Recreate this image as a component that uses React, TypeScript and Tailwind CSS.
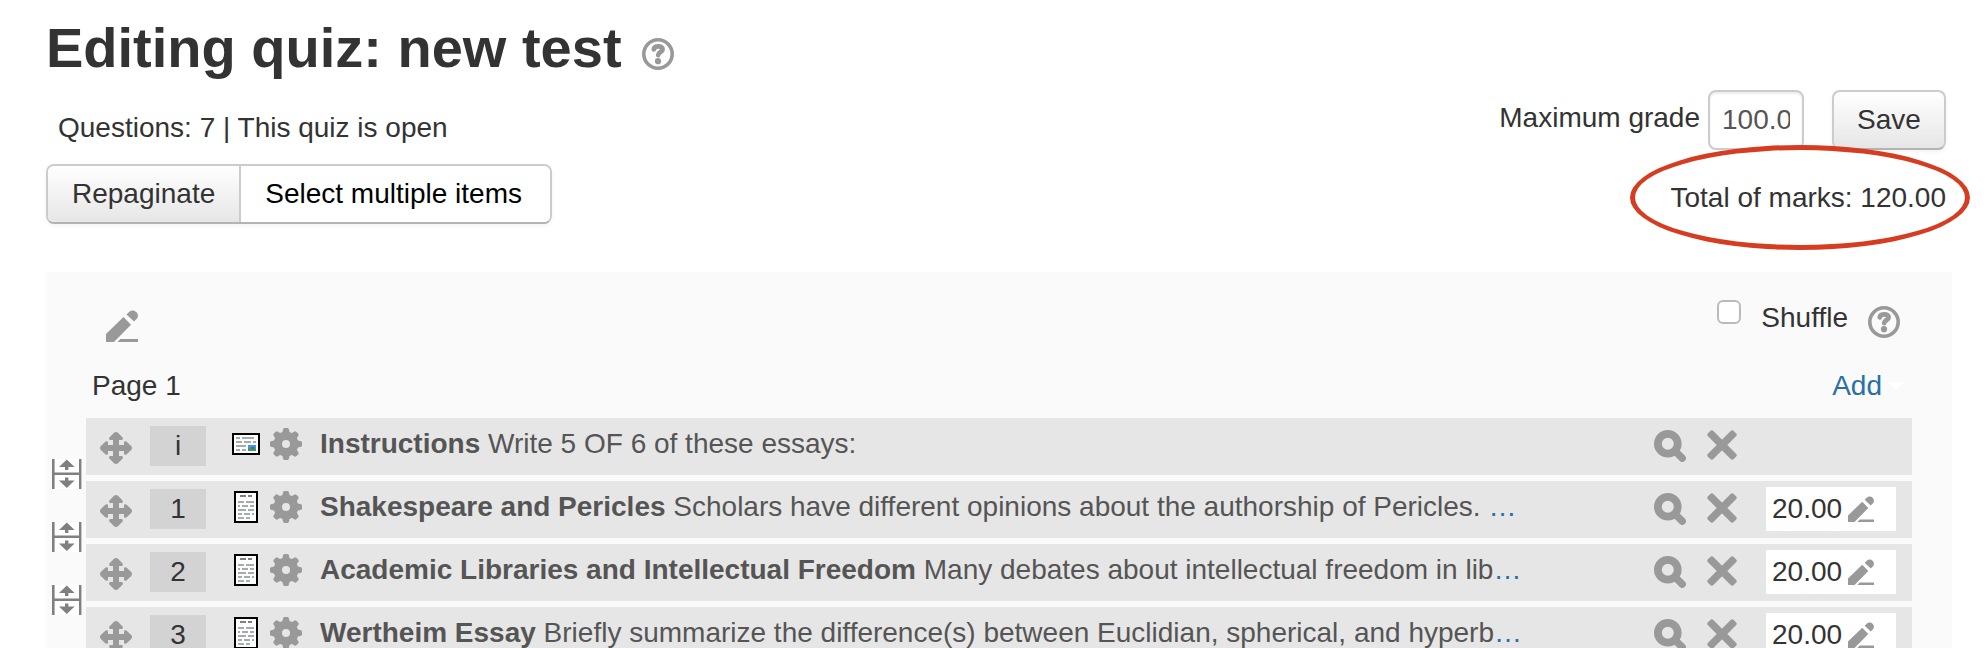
import { ReactNode } from "react";

interface Question {
  slot: string;
  name: string;
  text: string;
  truncated: boolean;
  type: "description" | "essay";
  mark?: string;
}

const questions: Question[] = [
  { slot: "i", name: "Instructions", text: "Write 5 OF 6 of these essays:", truncated: false, type: "description" },
  { slot: "1", name: "Shakespeare and Pericles", text: "Scholars have different opinions about the authorship of Pericles. ", truncated: true, type: "essay", mark: "20.00" },
  { slot: "2", name: "Academic Libraries and Intellectual Freedom", text: "Many debates about intellectual freedom in lib", truncated: true, type: "essay", mark: "20.00" },
  { slot: "3", name: "Wertheim Essay", text: "Briefly summarize the difference(s) between Euclidian, spherical, and hyperb", truncated: true, type: "essay", mark: "20.00" },
];

const gearAngles = [0, 45, 90, 135, 180, 225, 270, 315];

function HelpIcon() {
  return (
    <svg viewBox="0 0 32 32" className="block h-8 w-8" fill="none" stroke="#999">
      <circle cx="16" cy="16" r="14.2" strokeWidth="3.6" />
      <path d="M11.8 11.4C12.4 7.6 20.6 7.4 20.6 11.2C20.6 14 16.6 14 16.2 17" strokeWidth="4.8" strokeLinecap="round" />
      <circle cx="16" cy="23.2" r="3.1" fill="#999" stroke="none" />
    </svg>
  );
}

function PencilIcon({ className }: { className: string }) {
  return (
    <svg viewBox="0 0 32 32" className={className} fill="#999">
      <path d="M0 32V24L17.5 7L25 14.7L8 32Z" />
      <path d="M20.5 4.6L23.4 1.7C27.6-2 34.4 3.6 31 8.6L28 11.6Z" />
      <path d="M14.4 29H32V32H11.4Z" />
    </svg>
  );
}

function MoveIcon() {
  return (
    <svg viewBox="0 0 32 32" className="block h-8 w-8" fill="#999">
      <path d="M13 5H19V27H13ZM5 13H27V19H5Z" />
      {[0, 90, 180, 270].map((angle) => (
        <path key={angle} transform={`rotate(${angle} 16 16)`} d="M14 .8Q16-.8 18 .8L22.6 5.6Q23.4 8 21.5 8H10.5Q8.6 8 9.4 5.6Z" />
      ))}
    </svg>
  );
}

function GearIcon() {
  return (
    <svg viewBox="0 0 32 32" className="block h-8 w-8" fill="#999">
      <circle cx="16" cy="16" r="8.2" fill="none" stroke="#999" strokeWidth="8.4" />
      {gearAngles.map((angle) => (
        <path key={angle} transform={`rotate(${angle} 16 16)`} d="M12 6L13.2 1Q13.6 0 14.6 0H17.4Q18.4 0 18.8 1L20 6Z" />
      ))}
    </svg>
  );
}

function SearchIcon() {
  return (
    <svg viewBox="0 0 32 32" className="block h-8 w-8" fill="none" stroke="#999">
      <circle cx="13.8" cy="13.8" r="9.9" strokeWidth="7.8" />
      <path d="M21 21L28.2 28.2" strokeWidth="7.4" strokeLinecap="round" />
    </svg>
  );
}

function DeleteIcon() {
  return (
    <svg viewBox="0 0 30 30" className="block h-[30px] w-[30px]" fill="#999">
      <rect x="-3.2" y="11.2" width="36.4" height="7.6" rx="2.2" transform="rotate(45 15 15)" />
      <rect x="-3.2" y="11.2" width="36.4" height="7.6" rx="2.2" transform="rotate(-45 15 15)" />
    </svg>
  );
}

function SplitIcon() {
  return (
    <svg viewBox="0 0 30 30" className="block h-[30px] w-[30px]" fill="#808080">
      <path fill="#fff" d="M2 0H28V30H2Z" />
      <path d="M0 0H2.6V30H0ZM27 0H29.4V30H27ZM2 13.6H28V16H2Z" />
      <path d="M14.8 .5L22.6 8H16.4V11H13V8H7Z" />
      <path d="M14.8 29L22.6 21.4H16.4V18.6H13V21.4H7Z" />
    </svg>
  );
}

function DescriptionIcon() {
  return (
    <svg viewBox="0 0 28 22" className="block h-[22px] w-7">
      <path d="M1 1H27V21H1Z" fill="#fff" stroke="#000" strokeWidth="2" />
      <path d="M4 5H8M10 5H22M4 9H10M12 9H19M21 9H24M4 13H14M4 17H8M10 17H14" stroke="#a3adad" strokeWidth="2" />
      <path d="M16 12H24V18H16Z" fill="#3c96f5" />
      <path d="M16 15H18V14H20V16H24V18H16Z" fill="#3f9868" />
      <path d="M20 14H22V16H20Z" fill="#7a4d68" />
    </svg>
  );
}

function EssayIcon() {
  return (
    <svg viewBox="0 0 24 32" className="block h-8 w-6">
      <path d="M1 1H23V31H1Z" fill="#fff" stroke="#000" strokeWidth="2" />
      <path d="M6 5H12M14 5H18" stroke="#808080" strokeWidth="2" />
      <path d="M4 11H10M12 11H20M4 15H6M8 15H14M16 15H20M4 19H12M14 19H20M4 23H8M10 23H16M18 23H20" stroke="#a3adad" strokeWidth="2" />
      <path d="M4 27H10M12 27H16" stroke="#a3b5a8" strokeWidth="2" />
    </svg>
  );
}

function IconButton({ label, className = "", children }: { label: string; className?: string; children: ReactNode }) {
  return (
    <button type="button" aria-label={label} className={`shrink-0 cursor-pointer ${className}`}>
      {children}
    </button>
  );
}

function QuestionRow({ question }: { question: Question }) {
  return (
    <li className="flex h-[57px]">
      <div className="flex w-[34px] shrink-0 items-end">
        <IconButton label="Add page break" className="-mb-3.5"><SplitIcon /></IconButton>
      </div>
      <div className="flex min-w-0 flex-1 items-start bg-[#e6e6e6] pr-4 pl-3.5">
        <IconButton label="Move question" className="mt-3.5"><MoveIcon /></IconButton>
        <span className="mt-2 ml-[18px] w-14 shrink-0 bg-[#d3d3d3] text-center leading-10">{question.slot}</span>
        <span className="mt-2.5 mr-1 ml-5 flex h-8 w-10 shrink-0 items-center justify-center">
          {question.type === "description" ? <DescriptionIcon /> : <EssayIcon />}
        </span>
        <IconButton label="Edit question" className="mt-2.5"><GearIcon /></IconButton>
        <div className="mt-1.5 ml-[18px] min-w-0 flex-1 truncate leading-10 text-[#555]">
          <strong>{question.name}</strong> {question.text}
          {question.truncated && <a href="#question" className="text-[#2a6fa8]">…</a>}
        </div>
        <IconButton label="Preview question" className="mt-3"><SearchIcon /></IconButton>
        <IconButton label="Delete question" className="mt-3 ml-[21px]"><DeleteIcon /></IconButton>
        <div className="mt-1.5 ml-[29px] w-[130px] shrink-0">
          {question.mark && (
            <div className="flex h-11 items-center bg-white pl-1.5">
              <span>{question.mark}</span>
              <IconButton label="Edit maximum mark" className="ml-1.5"><PencilIcon className="block h-[26px] w-[26px]" /></IconButton>
            </div>
          )}
        </div>
      </div>
    </li>
  );
}

export default function App() {
  return (
    <main className="h-screen overflow-hidden bg-white pt-2 pr-9 pl-[46px] font-['Liberation_Sans',Arial,sans-serif] text-[28px] leading-10 text-[#333]">
      <div className="flex items-center">
        <h1 className="text-[56px] leading-[80px] font-bold">Editing quiz: new test</h1>
        <IconButton label="Help with editing quiz" className="mt-3 ml-5"><HelpIcon /></IconButton>
      </div>

      <div className="mt-0.5 flex justify-between pr-1.5">
        <div className="pt-[18px]">
          <p className="pl-3">Questions: 7 | This quiz is open</p>
          <div className="mt-4 flex h-[60px] w-max rounded-lg border-2 border-[#ccc] border-b-[#b3b3b3] shadow-[0_2px_4px_rgba(0,0,0,0.05)]">
            <button type="button" className="rounded-l-md border-r-2 border-[#ccc] bg-linear-to-b from-white to-[#e6e6e6] px-6">Repaginate</button>
            <button type="button" className="rounded-r-md bg-white pr-7 pl-6 text-black">Select multiple items</button>
          </div>
        </div>

        <div>
          <form className="flex h-[60px] items-center justify-end">
            <label htmlFor="maxgrade" className="pb-1">Maximum grade</label>
            <input
              id="maxgrade"
              type="text"
              defaultValue="100.00"
              className="ml-2 h-[60px] w-24 rounded-lg border-2 border-[#ccc] bg-white px-3 text-[#555] shadow-[inset_0_2px_2px_rgba(0,0,0,0.075)]"
            />
            <button type="button" className="ml-7 h-[60px] w-[114px] rounded-lg border-2 border-[#ccc] border-b-[#b3b3b3] bg-linear-to-b from-white to-[#e6e6e6] shadow-[0_2px_4px_rgba(0,0,0,0.05)]">Save</button>
          </form>
          <div className="relative mt-7 ml-auto w-max">
            Total of marks: 120.00
            <span className="pointer-events-none absolute -top-[33px] -right-6 h-[105px] w-[340px] rounded-[50%] border-[5px] border-[#d63c20]" />
          </div>
        </div>
      </div>

      <section className="mt-12 h-screen bg-[#fafafa] pt-6 pr-10 pl-1.5">
        <div className="flex h-[46px] items-end justify-between pr-3 pl-[54px]">
          <IconButton label="Edit section heading"><PencilIcon className="block h-8 w-8" /></IconButton>
          <div className="flex h-full items-start">
            <input id="shuffle" type="checkbox" className="mt-1 h-6 w-6 appearance-none rounded-md border-2 border-[#bbb] bg-white" />
            <label htmlFor="shuffle" className="mt-0.5 ml-5">Shuffle</label>
            <IconButton label="Help with shuffle" className="mt-2.5 ml-5"><HelpIcon /></IconButton>
          </div>
        </div>

        <div className="mt-6 flex items-center justify-between pr-2 pl-10">
          <h2>Page 1</h2>
          <a href="#add" className="flex items-center text-[#2a6fa8]">
            Add
            <span className="ml-1.5 border-x-8 border-t-8 border-x-transparent border-t-white" />
          </a>
        </div>

        <ul className="mt-3 flex flex-col gap-1.5">
          {questions.map((question) => <QuestionRow key={question.slot} question={question} />)}
        </ul>
      </section>
    </main>
  );
}
